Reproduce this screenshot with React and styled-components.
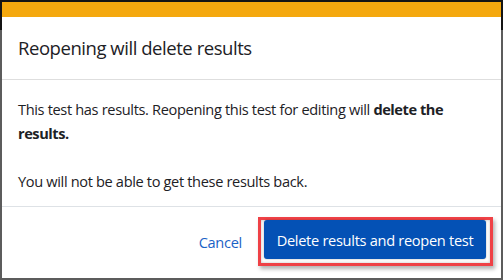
import React from "react";
import styled, { createGlobalStyle } from "styled-components";

const Global = createGlobalStyle`
  html, body { margin: 0; padding: 0; }
  body {
    width: 503px;
    height: 280px;
    overflow: hidden;
    font-family: "Open Sans", "Noto Sans", sans-serif;
    color: #1d2125;
  }
`;

const Backdrop = styled.div`
  width: 503px;
  height: 280px;
  box-sizing: border-box;
  padding: 2px;
  background: linear-gradient(#141414 0 30px, #5c5c5c 30px);
`;

const Modal = styled.div`
  height: 100%;
  display: flex;
  flex-direction: column;
  background: #fff;
`;

const Accent = styled.div`
  height: 15px;
  flex: none;
  background: #f4a80e;
`;

const Header = styled.div`
  height: 62px;
  flex: none;
  display: flex;
  align-items: center;
  padding: 0 16px;
  border-bottom: 1px solid #dedede;
`;

const Title = styled.h5`
  margin: 0;
  font-size: 18.5px;
  font-weight: 400;
  letter-spacing: -0.45px;
  line-height: 1.2;
`;

const Body = styled.div`
  height: 127px;
  flex: none;
  box-sizing: border-box;
  padding: 17px 16px 0;
  border-bottom: 1px solid #dee2e6;
  font-size: 14.6px;
  letter-spacing: -0.35px;
  line-height: 24px;
`;

const Para = styled.p`
  margin: 0 0 24px;
`;

const Strong = styled.b`
  font-weight: 700;
  letter-spacing: -0.45px;
`;

const Footer = styled.div`
  flex: 1;
  display: flex;
  align-items: center;
  justify-content: flex-end;
  gap: 16px;
  padding: 0 8px 2px 0;
`;

const LinkButton = styled.button`
  border: none;
  background: none;
  padding: 0;
  font-family: inherit;
  font-size: 14.6px;
  letter-spacing: -0.3px;
  color: #1a62c6;
  cursor: pointer;
`;

const Highlight = styled.div`
  border: 3px solid #ef4146;
  padding: 0 4px 4px 3px;
  box-shadow: 2px 3px 4px rgba(0, 0, 0, 0.3), inset 0 0 3px rgba(0, 0, 0, 0.25);
  display: flex;
`;

const PrimaryButton = styled.button`
  width: 222px;
  height: 39px;
  border: none;
  border-radius: 3px;
  background: #0451b5;
  color: #fff;
  font-family: inherit;
  font-size: 14.6px;
  letter-spacing: -0.3px;
  box-shadow: 0 0 2px rgba(0, 0, 0, 0.35);
  cursor: pointer;
`;

export default function App() {
  return (
    <>
      <Global />
      <Backdrop>
        <Modal>
          <Accent />
          <Header>
            <Title>Reopening will delete results</Title>
          </Header>
          <Body>
            <Para>
              This test has results. Reopening this test for editing will{" "}
              <Strong>delete the results.</Strong>
            </Para>
            <Para>You will not be able to get these results back.</Para>
          </Body>
          <Footer>
            <LinkButton>Cancel</LinkButton>
            <Highlight>
              <PrimaryButton>Delete results and reopen test</PrimaryButton>
            </Highlight>
          </Footer>
        </Modal>
      </Backdrop>
    </>
  );
}
